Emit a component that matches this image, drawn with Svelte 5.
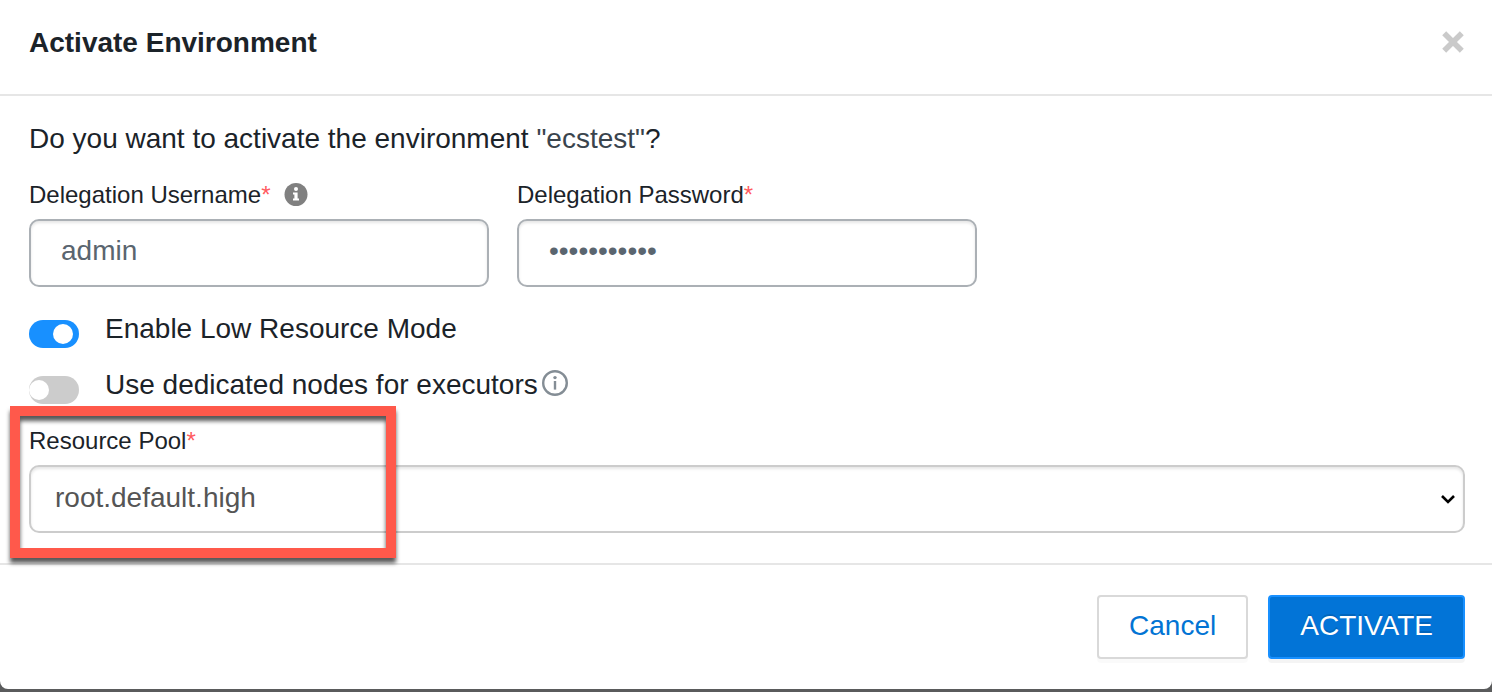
<script>
  let username = $state('admin');
  let password = $state('ecsadmin123');
  let lowResource = $state(true);
  let dedicatedNodes = $state(false);
  let pool = $state('root.default.high');
</script>

<div class="dialog" role="dialog" aria-labelledby="dialog-title">
  <header>
    <h1 id="dialog-title">Activate Environment</h1>
    <button class="close" type="button" aria-label="Close">
      <svg width="24" height="24" viewBox="0 0 24 24" aria-hidden="true">
        <path d="M3.2 2.2 20.8 19.8M20.8 2.2 3.2 19.8" stroke="#cacaca" stroke-width="5.6" />
      </svg>
    </button>
  </header>

  <form id="activate-form" onsubmit={(e) => e.preventDefault()}>
    <p class="question">Do you want to activate the environment <span class="env">"ecstest"</span>?</p>

    <div class="credentials">
      <div class="field">
        <div class="label-row">
          <label for="username">Delegation Username<span class="required">*</span></label>
          <svg width="24" height="24" viewBox="0 0 24 24" aria-hidden="true">
            <circle cx="12" cy="11.5" r="11.5" fill="#808080" />
            <circle cx="12" cy="6" r="2" fill="#fff" />
            <path d="M9 9.5h4.6v6H15v2H9v-2h1.4v-4H9z" fill="#fff" />
          </svg>
        </div>
        <input id="username" class="text" type="text" autocomplete="off" bind:value={username} />
      </div>
      <div class="field">
        <div class="label-row">
          <label for="password">Delegation Password<span class="required">*</span></label>
        </div>
        <input id="password" class="text" type="password" autocomplete="off" bind:value={password} />
      </div>
    </div>

    <div class="toggle">
      <input id="low-resource" type="checkbox" role="switch" bind:checked={lowResource} />
      <label for="low-resource">Enable Low Resource Mode</label>
    </div>
    <div class="toggle">
      <input id="dedicated" type="checkbox" role="switch" bind:checked={dedicatedNodes} />
      <label for="dedicated">Use dedicated nodes for executors</label>
      <svg width="28" height="28" viewBox="0 0 28 28" aria-hidden="true">
        <circle cx="14" cy="14" r="11.8" fill="none" stroke="#848d95" stroke-width="2.4" />
        <circle cx="14" cy="8.6" r="1.7" fill="#848d95" />
        <path d="M14 12v8.6" stroke="#848d95" stroke-width="2.4" />
      </svg>
    </div>

    <div class="pool">
      <div class="label-row">
        <label for="pool">Resource Pool<span class="required">*</span></label>
      </div>
      <div class="select-wrap">
        <select id="pool" bind:value={pool}>
          <option value="root.default.high">root.default.high</option>
        </select>
        <svg class="chevron" width="16" height="10" viewBox="0 0 16 10" aria-hidden="true">
          <path d="M2 2l6 6 6-6" fill="none" stroke="#000" stroke-width="2.6" />
        </svg>
      </div>
      <div class="highlight"></div>
    </div>
  </form>

  <footer>
    <button class="btn" type="button">Cancel</button>
    <button class="btn primary" type="submit" form="activate-form">ACTIVATE</button>
  </footer>
</div>

<style>
  :global(body) {
    margin: 0;
    background: #5a5b5c;
  }

  .dialog {
    background: #fff;
    border-radius: 0 0 8px 8px;
    color: #1b2329;
    font: 28px/44px "Liberation Sans", Arial, sans-serif;
  }

  .dialog * {
    box-sizing: border-box;
  }

  header {
    display: flex;
    align-items: center;
    justify-content: space-between;
    padding: 21px 27px 29px 29px;
    border-bottom: 2px solid #e6e6e6;
  }

  h1 {
    margin: 0;
    font-size: 28px;
    line-height: 44px;
  }

  button,
  input,
  select {
    margin: 0;
    font: inherit;
  }

  .close {
    display: flex;
    padding: 0;
    border: 0;
    background: none;
    cursor: pointer;
  }

  form {
    padding: 21px 27px 30px 29px;
    border-bottom: 2px solid #e6e6e6;
  }

  .question {
    margin: 0 0 20px;
  }

  .env {
    color: #3a444d;
  }

  .credentials {
    display: flex;
    gap: 28px;
    margin-bottom: 20px;
  }

  .field {
    flex: 0 1 460px;
  }

  .label-row {
    display: flex;
    align-items: center;
    gap: 14px;
    height: 28px;
    margin-bottom: 10px;
    font-size: 24px;
    line-height: 28px;
  }

  .required {
    color: #ff5b5f;
  }

  .text {
    display: block;
    width: 100%;
    height: 68px;
    padding: 0 30px 4px;
    border: 2px solid #abb0b5;
    border-radius: 10px;
    background: #fff;
    box-shadow: inset 0 2px 3px #0000001a;
    color: #5a656f;
  }

  .toggle {
    display: flex;
    align-items: center;
    height: 44px;
    margin-bottom: 12px;
  }

  .toggle input {
    appearance: none;
    display: flex;
    width: 50px;
    height: 28px;
    margin: 10px 26px 0 0;
    padding: 4px 6px 4px 0;
    border-radius: 14px;
    background: #ccc;
  }

  .toggle input::before {
    content: "";
    width: 20px;
    height: 20px;
    border-radius: 50%;
    background: #fff;
  }

  .toggle input:checked {
    justify-content: flex-end;
    background: #1890ff;
  }

  .toggle svg {
    margin: 0 0 4px 3px;
  }

  .pool {
    position: relative;
    margin-top: 20px;
  }

  .select-wrap {
    display: grid;
    align-items: center;
  }

  .select-wrap > :global(*) {
    grid-area: 1 / 1;
  }

  select {
    appearance: none;
    width: 100%;
    height: 68px;
    padding: 0 40px 2px 24px;
    border: 2px solid #ccc;
    border-radius: 10px;
    background: #fff;
    box-shadow: inset 0 2px 3px #0000001a;
    color: #555;
  }

  .chevron {
    justify-self: end;
    margin-right: 9px;
    pointer-events: none;
  }

  .highlight {
    position: absolute;
    top: -21px;
    left: -19px;
    width: 386px;
    height: 152px;
    border: 10px solid #ff594b;
    filter: drop-shadow(0 5px 2px #000000a6);
    pointer-events: none;
  }

  footer {
    display: flex;
    justify-content: flex-end;
    gap: 20px;
    padding: 30px 27px 30px 29px;
  }

  .btn {
    height: 64px;
    padding: 0 30px 2px;
    border: 2px solid #d9d9d9;
    border-radius: 4px;
    background: #fff;
    box-shadow: 0 4px 0 #00000005;
    color: #0274d4;
    cursor: pointer;
  }

  .primary {
    border-color: #1890ff;
    background: #0274d7;
    box-shadow: 0 4px 0 #0000000b;
    color: #fff;
    text-shadow: 0 -2px 0 #0000001f;
  }
</style>
